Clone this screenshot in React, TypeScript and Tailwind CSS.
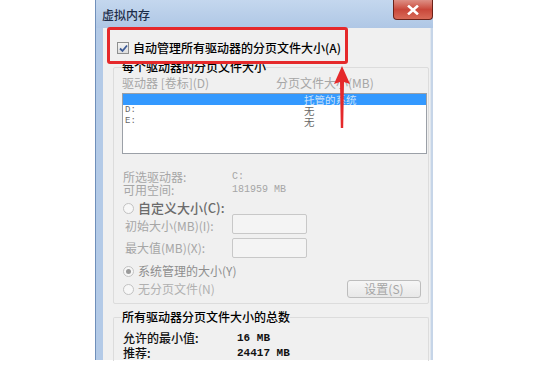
import React from 'react';

// rows of the drive list
const drives = [
  { id: 'C:', size: '托管的系统', selected: true },
  { id: 'D:', size: '无', selected: false },
  { id: 'E:', size: '无', selected: false },
];

const Radio: React.FC<{ checked?: boolean }> = ({ checked }) => (
  <span className="w-[11px] h-[11px] rounded-full border border-[#c2c2c2] bg-[#f7f7f7] flex items-center justify-center shrink-0">
    {checked && <span className="w-[5px] h-[5px] rounded-full bg-[#9a9a9a]" />}
  </span>
);

const App: React.FC = () => {
  return (
    <div className="w-[549px] h-[367px] bg-white relative overflow-hidden font-['Noto_Sans_CJK_SC',sans-serif]">
      <div className="ml-[95px] w-[338px] h-[360px] flex flex-col">
        {/* title bar */}
        <div className="h-[28px] flex items-start bg-gradient-to-b from-[#c4d7ee] to-[#afc7e5] border-l border-[#7090bb]">
          <span className="mt-[8px] ml-[6px] text-[12px] leading-[14px] text-[#1d2d4a] font-medium">虚拟内存</span>
          <div className="ml-auto w-[40px] h-[20px] rounded-b-[4px] border border-t-0 border-[#6b2219] bg-gradient-to-b from-[#dd8f85] via-[#c9473a] to-[#d86a58] flex items-center justify-center">
            <svg width="12" height="10" viewBox="0 0 12 10">
              <path d="M2 1.5 L10 8.5 M10 1.5 L2 8.5" stroke="#ffffff" strokeWidth="2.6" strokeLinecap="square" />
            </svg>
          </div>
        </div>

        <div className="flex-1 flex min-h-0">
          <div className="w-[8px] bg-[#b3cae7] border-l border-[#6f8fba]" />
          <div className="flex-1 bg-[#f0f0f0] pl-[10px] pr-[1px] text-[12px]">
            {/* auto manage checkbox */}
            <div className="mt-[14px] ml-[4px] h-[12px] flex items-center gap-[4px]">
              <span className="w-[12px] h-[12px] border border-[#8e8f8f] bg-gradient-to-b from-[#f4f4f4] to-[#dedede] flex items-center justify-center">
                <svg width="9" height="9" viewBox="0 0 9 9">
                  <path d="M1 4.5 L3.5 7 L8 1.5" fill="none" stroke="#3c5a96" strokeWidth="1.8" />
                </svg>
              </span>
              <span className="leading-[12px] text-black font-medium">自动管理所有驱动器的分页文件大小(A)</span>
            </div>

            {/* per-drive group */}
            <div className="mt-[13px] h-[237px] border border-[#dcdcdc] rounded-[2px] pl-[8px] pr-[1px]">
              <div className="-mt-[7px] w-fit bg-[#f0f0f0] leading-[12px] text-black font-medium">每个驱动器的分页文件大小</div>
              <div className="mt-[4px] h-[12px] flex leading-[12px] text-[#a6a6a6]">
                <span className="w-[154px]">驱动器 [卷标](D)</span>
                <span>分页文件大小(MB)</span>
              </div>
              <div className="mt-[4px] h-[61px] border border-[#9ba0a7] bg-white">
                {drives.map((d) => (
                  <div
                    key={d.id}
                    className={d.selected ? 'h-[11px] flex items-center bg-[#3399ff] text-[#cfe3f9]' : 'h-[11px] flex items-center text-[#666666]'}
                  >
                    <span className="w-[181px] pl-[2px] font-['Liberation_Mono',monospace] text-[9px] leading-[11px]">{d.selected ? '' : d.id}</span>
                    <span className="text-[10.5px] leading-[11px]">{d.size}</span>
                  </div>
                ))}
              </div>

              <div className="mt-[16px] h-[13px] flex items-center text-[#a6a6a6] pl-[1px] leading-[13px]">
                <span className="w-[109px]">所选驱动器:</span>
                <span className="font-['Liberation_Mono',monospace] text-[10px]">C:</span>
              </div>
              <div className="h-[13px] flex items-center text-[#a6a6a6] pl-[1px] leading-[13px]">
                <span className="w-[109px]">可用空间:</span>
                <span className="font-['Liberation_Mono',monospace] text-[10px]">181959 MB</span>
              </div>

              <div className="mt-[6px] h-[12px] flex items-center gap-[4px] pl-[1px]">
                <Radio />
                <span className="text-[13px] leading-[12px] text-[#6b6b6b] font-medium">自定义大小(C):</span>
              </div>
              <div className="h-[20px] flex items-start pl-[3px]">
                <span className="w-[107px] mt-[6px] leading-[12px] text-[#a6a6a6]">初始大小(MB)(I):</span>
                <span className="w-[75px] h-[20px] border border-[#c8c8c8] rounded-[2px] bg-[#f4f4f4]" />
              </div>
              <div className="mt-[4px] h-[20px] flex items-start pl-[3px]">
                <span className="w-[107px] mt-[4px] leading-[12px] text-[#a6a6a6]">最大值(MB)(X):</span>
                <span className="w-[75px] h-[20px] border border-[#c8c8c8] rounded-[2px] bg-[#f4f4f4]" />
              </div>

              <div className="mt-[7px] h-[12px] flex items-center gap-[4px] pl-[1px]">
                <Radio checked />
                <span className="leading-[12px] text-[#8e8e8e]">系统管理的大小(Y)</span>
              </div>
              <div className="mt-[3px] h-[18px] flex items-center pl-[1px] pr-[6px]">
                <Radio />
                <span className="ml-[4px] leading-[12px] text-[#b0b0b0]">无分页文件(N)</span>
                <span className="ml-auto w-[74px] h-[18px] border border-[#bdbdbd] rounded-[3px] bg-gradient-to-b from-[#f6f6f6] to-[#e8e8e8] flex items-center justify-center leading-[12px] text-[#a6a6a6]">
                  设置(S)
                </span>
              </div>
            </div>

            {/* totals group */}
            <div className="mt-[13px] h-[44px] border border-[#dcdcdc] border-b-0 rounded-t-[2px] pl-[8px]">
              <div className="-mt-[7px] w-fit bg-[#f0f0f0] leading-[12px] text-black font-medium">所有驱动器分页文件大小的总数</div>
              <div className="mt-[9px] h-[12px] flex items-center pl-[1px] text-[#111111]">
                <span className="w-[114px] leading-[12px] font-medium">允许的最小值:</span>
                <span className="font-['Liberation_Mono',monospace] text-[11px] font-bold">16 MB</span>
              </div>
              <div className="mt-[3px] h-[12px] flex items-center pl-[1px] text-[#111111]">
                <span className="w-[114px] leading-[12px] font-medium">推荐:</span>
                <span className="font-['Liberation_Mono',monospace] text-[11px] font-bold">24417 MB</span>
              </div>
            </div>
          </div>
          <div className="w-[3px] bg-[#c6d5e8] border-l border-[#dfe6ee]" />
        </div>
      </div>

      {/* red annotation box */}
      <div className="absolute left-[107px] top-[27px] w-[241px] h-[37px] border-[3px] border-[#e5292b] rounded-[3px]" />
      {/* red annotation arrow */}
      <svg className="absolute left-[330px] top-[62px]" width="24" height="70" viewBox="0 0 24 70">
        <path d="M12 4 L20 22 L14 20 L13.2 66 L10.8 66 L10 20 L4 22 Z" fill="#e5292b" />
      </svg>
    </div>
  );
};

export default App;
